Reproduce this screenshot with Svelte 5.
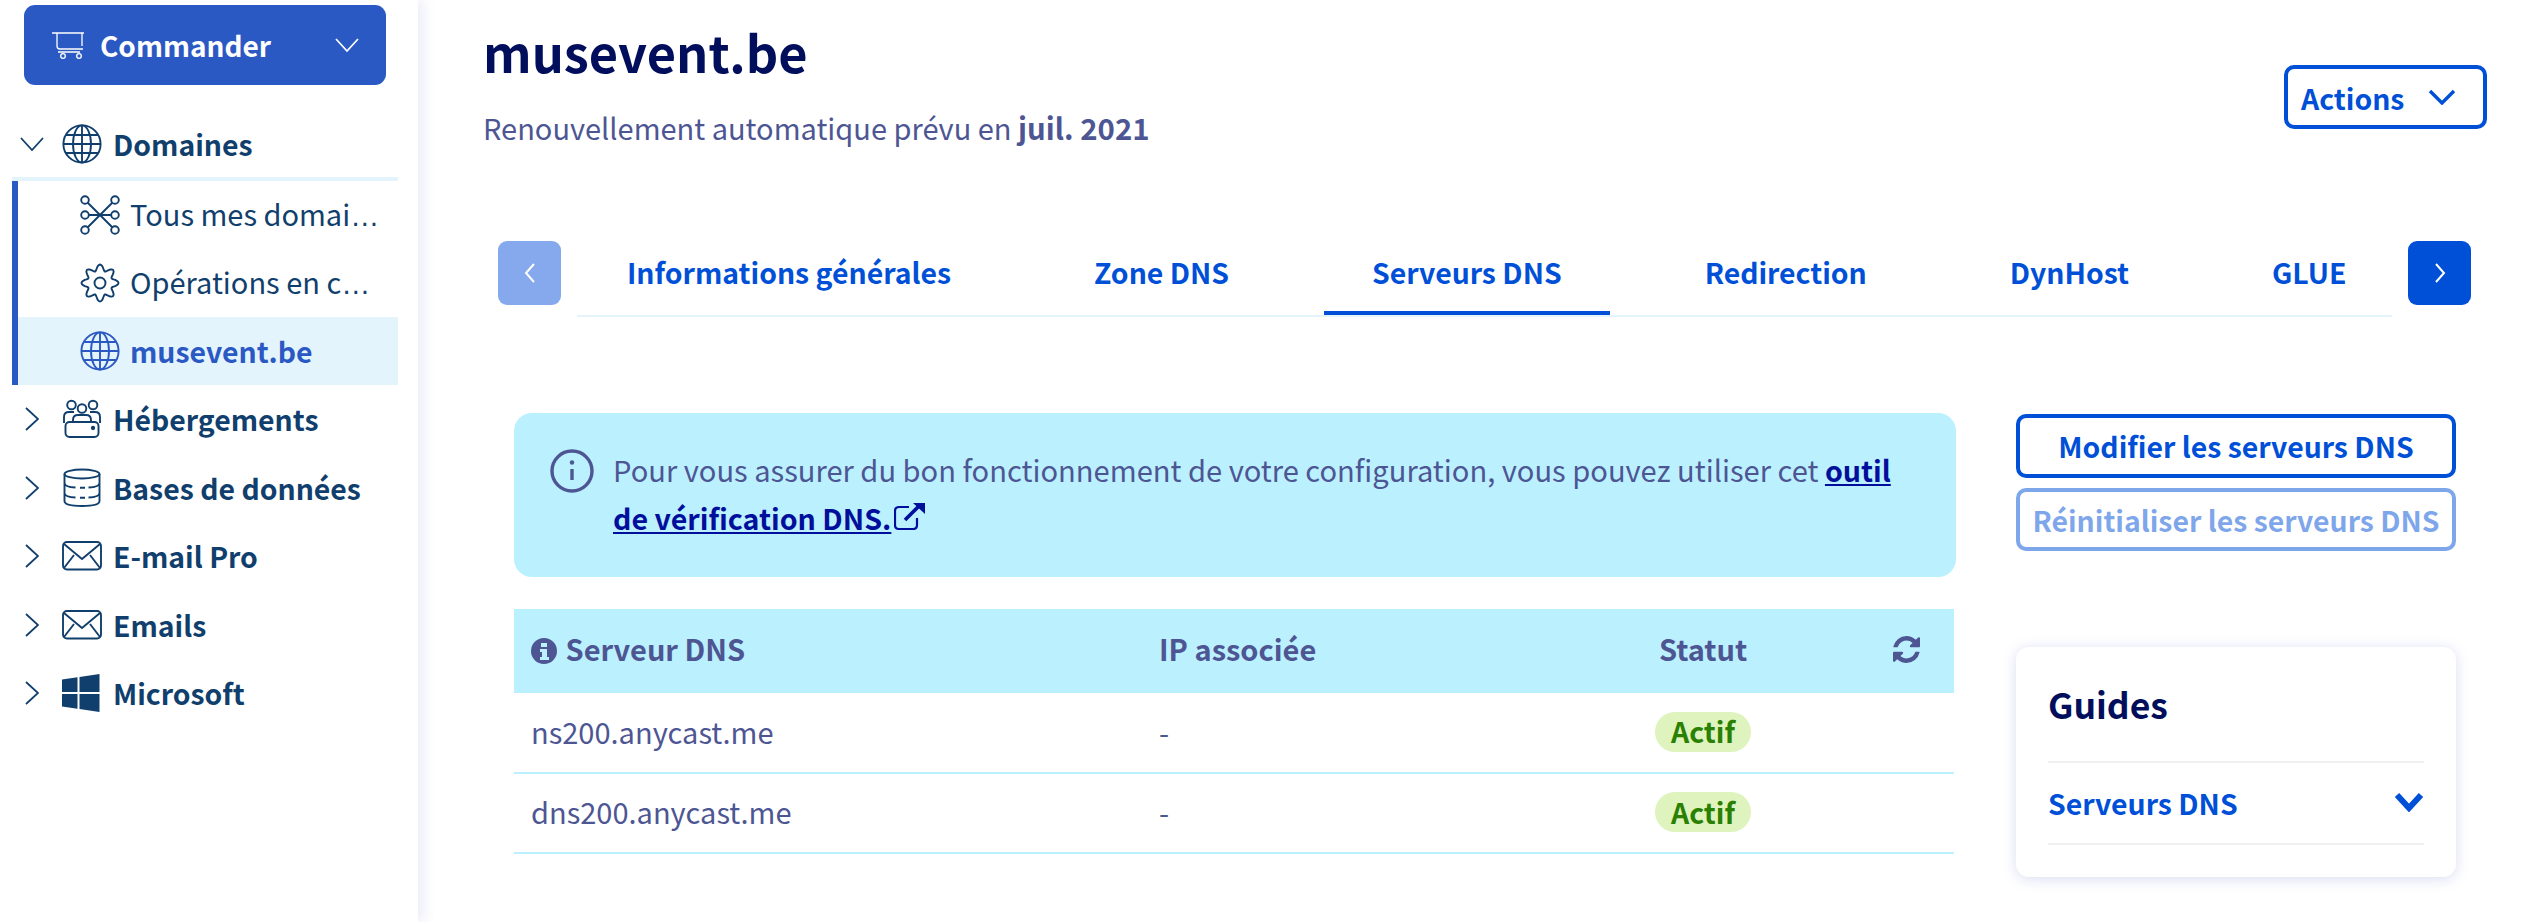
<script>
  const tabs = ["Informations générales", "Zone DNS", "Serveurs DNS", "Redirection", "DynHost", "GLUE"];
  const activeTab = "Serveurs DNS";

  const servers = [
    { name: "ns200.anycast.me", ip: "-", status: "Actif" },
    { name: "dns200.anycast.me", ip: "-", status: "Actif" }
  ];

  // lobed outline for the cog icon
  function gearPath() {
    let d = "";
    for (let i = 0; i <= 96; i++) {
      const a = (i / 96) * Math.PI * 2;
      const r = 15.5 + 3 * Math.cos(a * 8);
      d += `${i ? "L" : "M"}${(20 + r * Math.sin(a)).toFixed(2)} ${(20 - r * Math.cos(a)).toFixed(2)}`;
    }
    return d + "Z";
  }
</script>

{#snippet globe()}
  <svg class="ico" viewBox="0 0 40 40" fill="none" stroke="currentColor" stroke-width="1.9">
    <circle cx="20" cy="20" r="18.6" />
    <ellipse cx="20" cy="20" rx="9" ry="18.6" />
    <path d="M20 1.4v37.2M1.4 20h37.2M4 11h32M4 29h32" />
  </svg>
{/snippet}

{#snippet chevRight()}
  <svg class="chev-r" viewBox="0 0 14 24" fill="none" stroke="currentColor" stroke-width="1.8"><path d="M1 1l12 11L1 23" /></svg>
{/snippet}

{#snippet envelope()}
  <svg class="ico" viewBox="0 0 40 30" fill="none" stroke="currentColor" stroke-width="1.9">
    <rect x="1" y="1" width="38" height="27.5" rx="4" />
    <path d="M2 3l18 15L38 3M2 27l10-13M38 27L28 14" />
  </svg>
{/snippet}

<div class="page">
  <aside class="sidebar">
    <button class="order">
      <svg class="cart" viewBox="0 0 32 27" fill="none" stroke="currentColor" stroke-width="1.3">
        <path d="M0 1h32M5 1v13q0 3 3 3h23M30 1v13M6 20h22" />
        <circle cx="11" cy="24" r="2.3" />
        <circle cx="27" cy="24" r="2.3" />
      </svg>
      <span>Commander</span>
      <svg class="order-chev" viewBox="0 0 24 14" fill="none" stroke="currentColor" stroke-width="1.7"><path d="M1 1l11 12L23 1" /></svg>
    </button>

    <nav class="nav">
      <div class="row open">
        <svg class="chev-d" viewBox="0 0 24 14" fill="none" stroke="currentColor" stroke-width="1.8"><path d="M1 1l11 12L23 1" /></svg>
        {@render globe()}
        <span class="label">Domaines</span>
      </div>
      <div class="sub">
        <div class="sub-row">
          <svg class="ico" viewBox="0 0 40 40" fill="none" stroke="currentColor" stroke-width="1.9">
            <path d="M7 7l26 26M33 7L7 33M9 20h22" />
            <circle cx="5" cy="5" r="3.8" fill="#fff" />
            <circle cx="35" cy="5" r="3.8" fill="#fff" />
            <circle cx="5" cy="20" r="3.8" fill="#fff" />
            <circle cx="35" cy="20" r="3.8" fill="#fff" />
            <circle cx="5" cy="35" r="3.8" fill="#fff" />
            <circle cx="35" cy="35" r="3.8" fill="#fff" />
          </svg>
          <span class="sub-label">Tous mes domai<span class="dots">…</span></span>
        </div>
        <div class="sub-row">
          <svg class="ico" viewBox="0 0 40 40" fill="none" stroke="currentColor" stroke-width="1.9">
            <path d="{gearPath()}" />
            <circle cx="20" cy="20" r="5.5" />
          </svg>
          <span class="sub-label">Opérations en c<span class="dots">…</span></span>
        </div>
        <div class="sub-row current">
          {@render globe()}
          <span class="sub-label">musevent.be</span>
        </div>
      </div>

      <div class="row">
        {@render chevRight()}
        <svg class="ico" viewBox="0 0 40 40" fill="none" stroke="currentColor" stroke-width="1.9">
          <circle cx="9.5" cy="6" r="4.3" />
          <circle cx="20" cy="9.5" r="4.3" />
          <circle cx="31" cy="6" r="4.3" />
          <path d="M2 24v-6q0-5 5-5h5M38 24v-6q0-5-5-5h-5M11 22v-1q0-5 5-5h8q5 0 5 5v1" />
          <rect x="3.5" y="23" width="33" height="15" rx="4" />
          <circle cx="31" cy="29" r="1.2" fill="currentColor" />
        </svg>
        <span class="label">Hébergements</span>
      </div>
      <div class="row">
        {@render chevRight()}
        <svg class="ico" viewBox="0 0 40 40" fill="none" stroke="currentColor" stroke-width="1.9">
          <ellipse cx="20" cy="6" rx="17.5" ry="4.5" />
          <path d="M2.5 6v27q0 5 17.5 5t17.5-5V6M2.5 15q0 4 11 4.5M37.5 15q0 4-11 4.5M18 19.7h5M2.5 25q0 4 11 4.5M37.5 25q0 4-11 4.5M18 29.7h5" />
        </svg>
        <span class="label">Bases de données</span>
      </div>
      <div class="row">
        {@render chevRight()}
        {@render envelope()}
        <span class="label">E-mail Pro</span>
      </div>
      <div class="row">
        {@render chevRight()}
        {@render envelope()}
        <span class="label">Emails</span>
      </div>
      <div class="row">
        {@render chevRight()}
        <svg class="ico" viewBox="0 0 40 40" fill="currentColor">
          <path d="M0 6.5l15.5-2.2v14.7H0zM17.5 4l20-3v18h-20zM0 21h15.5v14.7L0 33.5zM17.5 21h20v18l-20-3z" />
        </svg>
        <span class="label">Microsoft</span>
      </div>
    </nav>
  </aside>

  <main class="main">
    <header class="head">
      <div>
        <h1>musevent.be</h1>
        <p class="renew">Renouvellement automatique prévu en <b>juil. 2021</b></p>
      </div>
      <button class="actions">
        Actions
        <svg viewBox="0 0 28 16" fill="none" stroke="currentColor" stroke-width="3.4"><path d="M2 2l12 12L26 2" /></svg>
      </button>
    </header>

    <div class="tabbar">
      <button class="arrow off" aria-label="Précédent">
        <svg viewBox="0 0 12 22" fill="none" stroke="currentColor" stroke-width="2"><path d="M10 2L2 11l8 9" /></svg>
      </button>
      <div class="tablist">
        {#each tabs as tab}
          <div class="tab" class:active={tab === activeTab}>{tab}</div>
        {/each}
      </div>
      <button class="arrow" aria-label="Suivant">
        <svg viewBox="0 0 12 22" fill="none" stroke="currentColor" stroke-width="2"><path d="M2 2l8 9-8 9" /></svg>
      </button>
    </div>

    <section class="content">
      <div class="left">
        <div class="notice">
          <svg class="notice-ico" viewBox="0 0 44 44" fill="none" stroke="currentColor" stroke-width="3.4">
            <circle cx="22" cy="22" r="20" />
            <path d="M22 20v11" />
            <circle cx="22" cy="13.5" r="2.2" fill="currentColor" stroke="none" />
          </svg>
          <p>
            Pour vous assurer du bon fonctionnement de votre configuration, vous pouvez utiliser cet
            <a href="#top">outil de vérification DNS. </a><svg class="ext" viewBox="0 0 32 28" fill="none" stroke="#000e9c" stroke-width="2.2">
              <path d="M15 5H5q-4 0-4 4v14q0 4 4 4h14q4 0 4-4v-7" />
              <path d="M11 18L26 3" stroke-width="3.6" />
              <path d="M19 1h12v11z" fill="#000e9c" stroke="none" />
            </svg>
          </p>
        </div>

        <table>
          <thead>
            <tr>
              <th class="c1">
                <svg class="th-info" viewBox="0 0 26 26">
                  <circle cx="13" cy="13" r="13" fill="#4d5693" />
                  <path d="M10 5h6v4h-6zM9 11h7v8h2v3H9v-3h2v-5H9z" fill="#bbf0ff" />
                </svg>
                Serveur DNS
              </th>
              <th class="c2">IP associée</th>
              <th class="c3">
                Statut
                <svg class="refresh" viewBox="0 0 1536 1536"><path fill="#4d5693" d="M1511 928q0 5-1 7-64 268-268 434.5t-478 166.5q-146 0-282.5-55t-243.5-157l-129 129q-19 19-45 19t-45-19-19-45v-448q0-26 19-45t45-19h448q26 0 45 19t19 45-19 45l-137 137q71 66 161 102t187 36q134 0 250-65t186-179q11-17 53-117 8-23 30-23h192q13 0 22.5 9.5t9.5 22.5zm25-800v448q0 26-19 45t-45 19h-448q-26 0-45-19t-19-45 19-45l138-138q-148-137-349-137-134 0-250 65t-186 179q-11 17-53 117-8 23-30 23h-199q-13 0-22.5-9.5t-9.5-22.5v-7q65-268 270-434.5t480-166.5q146 0 284 55.5t245 156.5l130-129q19-19 45-19t45 19 19 45z" /></svg>
              </th>
            </tr>
          </thead>
          <tbody>
            {#each servers as s}
              <tr>
                <td>{s.name}</td>
                <td>{s.ip}</td>
                <td><span class="pill">{s.status}</span></td>
              </tr>
            {/each}
          </tbody>
        </table>
      </div>

      <div class="right">
        <button class="outline">Modifier les serveurs DNS</button>
        <button class="outline off">Réinitialiser les serveurs DNS</button>

        <div class="card">
          <h3>Guides</h3>
          <div class="guide">
            <span>Serveurs DNS</span>
            <svg viewBox="0 0 30 20" fill="none" stroke="currentColor" stroke-width="6"><path d="M3 3l12 13L27 3" /></svg>
          </div>
        </div>
      </div>
    </section>
  </main>
</div>

<style>
  :global(body) {
    margin: 0;
    background: #fff;
  }

  .page {
    display: flex;
    height: 922px;
    overflow: hidden;
    font-family: "Noto Sans CJK SC", "Noto Sans", sans-serif;
    color: #4d5693;
  }

  button {
    font-family: inherit;
    cursor: pointer;
  }

  /* Sidebar */
  .sidebar {
    width: 418px;
    flex: none;
    box-sizing: border-box;
    padding-top: 5px;
    background: #fff;
    box-shadow: 4px 0 14px rgba(90, 100, 200, 0.14);
    color: #113f6d;
    position: relative;
  }

  .order {
    display: flex;
    align-items: center;
    width: 362px;
    height: 80px;
    margin-left: 24px;
    padding: 0 27px 0 28px;
    box-sizing: border-box;
    border: none;
    border-radius: 11px;
    background: #2b59c3;
    color: #fff;
    font-size: 28px;
    font-weight: 700;
  }
  .cart {
    width: 32px;
    height: 27px;
    margin-right: 16px;
  }
  .order-chev {
    width: 24px;
    height: 14px;
    margin-left: auto;
  }

  .nav {
    margin-top: 26px;
  }

  .row {
    display: flex;
    align-items: center;
    height: 68.5px;
    font-size: 28.4px;
    font-weight: 700;
  }
  .row.open {
    box-sizing: border-box;
    height: 70px;
    width: 386px;
    margin-left: 12px;
    border-bottom: 4px solid #e4f4fc;
  }
  .chev-d {
    width: 24px;
    height: 14px;
    margin-left: 8px;
    margin-right: 18px;
  }
  .chev-r {
    width: 14px;
    height: 24px;
    margin-left: 25px;
    margin-right: 23px;
  }
  .ico {
    width: 40px;
    height: 40px;
    flex: none;
  }
  .label {
    margin-left: 11px;
    line-height: 1.2;
  }

  .sub {
    width: 386px;
    box-sizing: border-box;
    margin-left: 12px;
    border-left: 6px solid #2b59c3;
  }
  .sub-row {
    display: flex;
    align-items: center;
    height: 68px;
    padding-left: 62px;
    font-size: 29px;
  }
  .sub-row.current {
    background: #e4f4fc;
    color: #2b59c3;
    font-size: 28.4px;
    font-weight: 700;
  }
  .sub-label {
    margin-left: 10px;
    line-height: 1.3;
    white-space: nowrap;
  }
  .dots {
    font-family: "Liberation Sans", sans-serif;
    letter-spacing: 1px;
  }

  /* Header */
  .main {
    flex: 1;
    min-width: 0;
  }
  .head {
    display: flex;
    justify-content: space-between;
    align-items: flex-start;
    height: 241px;
    box-sizing: border-box;
    padding: 0 40px 0 65px;
  }
  h1 {
    margin: 24px 0 0;
    font-size: 50.5px;
    line-height: 54px;
    font-weight: 700;
    color: #000e5c;
  }
  .renew {
    margin: 29px 0 0;
    font-size: 29px;
    line-height: 40px;
  }
  .renew b {
    font-size: 29.4px;
  }
  .actions {
    display: flex;
    align-items: center;
    gap: 24px;
    width: 203px;
    height: 64px;
    margin-top: 65px;
    padding: 0 0 0 13px;
    box-sizing: border-box;
    border: 4px solid #0050d7;
    border-radius: 10px;
    background: #fff;
    color: #0050d7;
    font-size: 28.4px;
    font-weight: 700;
  }
  .actions svg {
    width: 28px;
    height: 16px;
  }

  /* Tabs */
  .tabbar {
    display: flex;
    align-items: flex-start;
    margin: 0 56px 0 80px;
  }
  .arrow {
    flex: none;
    display: flex;
    align-items: center;
    justify-content: center;
    width: 63px;
    height: 64px;
    padding: 0;
    border: none;
    border-radius: 9px;
    background: #0050d7;
    color: #fff;
  }
  .arrow.off {
    background: #85a9ec;
  }
  .arrow svg {
    width: 12px;
    height: 22px;
  }
  .tablist {
    flex: 1;
    min-width: 0;
    display: flex;
    gap: 47px;
    height: 76px;
    margin: 0 16px;
    padding-left: 2px;
    overflow: hidden;
    box-sizing: border-box;
    border-bottom: 2px solid #e4f4fc;
  }
  .tab {
    flex: none;
    display: flex;
    align-items: center;
    height: 74px;
    box-sizing: border-box;
    padding: 0 48px 10px;
    border-bottom: 4px solid transparent;
    color: #0050d7;
    font-size: 28.4px;
    font-weight: 700;
    white-space: nowrap;
  }
  .tab.active {
    border-bottom-color: #0050d7;
  }

  /* Content */
  .content {
    display: flex;
    gap: 60px;
    margin: 96px 71px 0 96px;
  }
  .left {
    width: 1442px;
    flex: none;
  }
  .notice {
    display: flex;
    gap: 19px;
    height: 164px;
    box-sizing: border-box;
    padding: 36px 60px 0 36px;
    border-radius: 18px;
    background: #bbf0ff;
  }
  .notice-ico {
    width: 44px;
    height: 44px;
    flex: none;
  }
  .notice p {
    margin: -3px 0 0;
    font-size: 29.1px;
    line-height: 47.5px;
  }
  .notice a {
    color: #000e9c;
    font-size: 28.6px;
    font-weight: 700;
  }
  .ext {
    width: 32px;
    height: 28px;
    margin-left: 3px;
  }

  table {
    width: 1440px;
    margin-top: 32px;
    border-collapse: collapse;
    table-layout: fixed;
    font-size: 29px;
  }
  thead tr {
    background: #bbf0ff;
    height: 84px;
  }
  th {
    box-sizing: border-box;
    text-align: left;
    padding: 0 0 6px 17px;
    font-weight: 700;
    position: relative;
  }
  .c1 {
    width: 628px;
  }
  .c2 {
    width: 500px;
  }
  .th-info {
    width: 26px;
    height: 26px;
    vertical-align: -3px;
    margin-right: 2px;
  }
  .refresh {
    position: absolute;
    right: 34px;
    top: 27px;
    width: 27px;
    height: 27px;
  }
  td {
    box-sizing: border-box;
    height: 80px;
    padding: 0 0 4px 17px;
    border-bottom: 2px solid #bbf0ff;
    white-space: nowrap;
  }
  .pill {
    display: inline-flex;
    align-items: center;
    height: 40px;
    margin-left: -4px;
    padding: 0 16px;
    border-radius: 20px;
    background: #def3bd;
    color: #2a8000;
    font-size: 28.4px;
    font-weight: 700;
    line-height: 1;
  }

  /* Right column */
  .right {
    width: 440px;
    flex: none;
    display: flex;
    flex-direction: column;
    gap: 10px;
    margin-top: 1px;
  }
  .outline {
    height: 63.5px;
    padding: 0;
    box-sizing: border-box;
    border: 4px solid #0050d7;
    border-radius: 10px;
    background: #fff;
    color: #0050d7;
    font-size: 28.4px;
    font-weight: 700;
  }
  .outline.off {
    opacity: 0.5;
  }
  .card {
    height: 230px;
    margin-top: 86px;
    box-sizing: border-box;
    padding: 0 32px;
    border-radius: 13px;
    background: #fff;
    box-shadow: 0 2px 14px rgba(70, 80, 190, 0.2);
  }
  h3 {
    display: flex;
    align-items: center;
    height: 116px;
    box-sizing: border-box;
    margin: 0;
    padding-bottom: 2px;
    border-bottom: 2px solid #f0f0f2;
    font-size: 35.5px;
    font-weight: 700;
    color: #000e5c;
  }
  .guide {
    display: flex;
    align-items: center;
    justify-content: space-between;
    height: 82px;
    box-sizing: border-box;
    padding-bottom: 2px;
    border-bottom: 2px solid #f0f0f2;
    color: #0050d7;
    font-size: 28.4px;
    font-weight: 700;
  }
  .guide svg {
    width: 30px;
    height: 20px;
  }
</style>
